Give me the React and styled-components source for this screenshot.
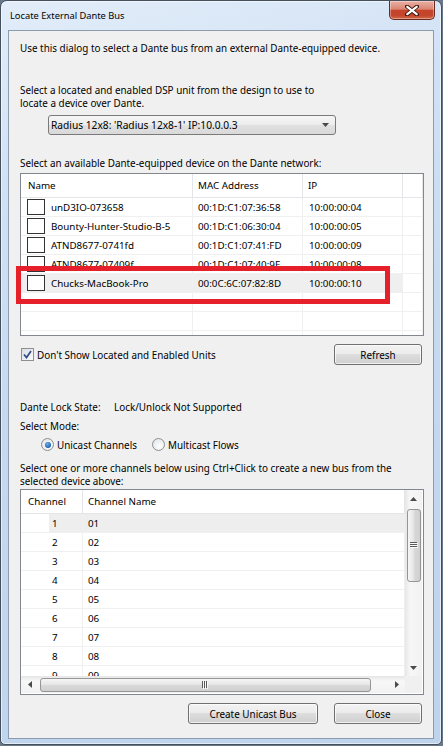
import React from 'react'
import styled, { createGlobalStyle } from 'styled-components'

const GlobalStyle = createGlobalStyle`
  * { box-sizing: border-box; }
  html, body {
    margin: 0;
    padding: 0;
    background: #68778a;
  }
  body {
    font-family: 'Noto Sans', 'Liberation Sans', sans-serif;
    font-size: 9.9px;
    color: #000;
  }
`

const devices = [
  { name: 'unD3IO-073658', mac: '00:1D:C1:07:36:58', ip: '10:00:00:04' },
  { name: 'Bounty-Hunter-Studio-B-5', mac: '00:1D:C1:06:30:04', ip: '10:00:00:05' },
  { name: 'ATND8677-0741fd', mac: '00:1D:C1:07:41:FD', ip: '10:00:00:09' },
  { name: 'ATND8677-07409f', mac: '00:1D:C1:07:40:9F', ip: '10:00:00:08' },
  { name: 'Chucks-MacBook-Pro', mac: '00:0C:6C:07:82:8D', ip: '10:00:00:10', selected: true },
]

const channels = Array.from({ length: 9 }, (_, i) => ({
  num: i + 1,
  name: String(i + 1).padStart(2, '0'),
}))

const Window = styled.div`
  width: 442px;
  height: 745px;
  border: 1px solid #46505d;
  border-radius: 7px 7px 5px 5px;
  background: linear-gradient(165deg, #e2edf9 0%, #d2e2f5 20%, #c5d9ef 50%, #bed4ed 100%);
  box-shadow: inset 0 0 0 1px rgba(255, 255, 255, 0.55);
  display: flex;
  flex-direction: column;
  overflow: hidden;
`

const TitleBar = styled.div`
  height: 29px;
  display: flex;
  align-items: flex-start;
  padding: 0 6px 0 9px;
`

const Title = styled.div`
  flex: 1;
  line-height: 29px;
  font-size: 9.3px;
`

const CloseBox = styled.div`
  width: 46px;
  height: 19px;
  border: 1px solid #6b2a20;
  border-top: none;
  border-radius: 0 0 5px 5px;
  background: linear-gradient(#eab0a5 0%, #d98672 45%, #c5442b 52%, #c3452c 80%, #d2694c 100%);
  box-shadow: inset 0 0 0 1px rgba(255, 255, 255, 0.35);
  display: flex;
  align-items: center;
  justify-content: center;
`

const Client = styled.div`
  flex: 1;
  margin: 0 7px 5px;
  border: 1px solid #8c9cae;
  background: #f0f0f0;
  padding: 0 9px 0 11px;
  display: flex;
  flex-direction: column;
`

const Para = styled.p`
  margin: ${p => p.$top}px 0 0;
  line-height: 13px;
  white-space: nowrap;
`

const Combo = styled.div`
  margin: 5px 0 0 28px;
  width: 288px;
  height: 20px;
  border: 1px solid #7a7a7a;
  border-radius: 3px;
  background: linear-gradient(#f6f6f6, #ececec 50%, #e1e1e1 51%, #d9d9d9);
  display: flex;
  align-items: center;
  justify-content: space-between;
  padding: 0 6px 0 2px;
  font-size: 10.2px;
`

const DeviceArea = styled.div`
  position: relative;
  margin-top: 3px;
`

const DeviceList = styled.div`
  height: 163px;
  border: 1px solid #828790;
  background: #fff;
  overflow: hidden;
`

const DevRow = styled.div`
  display: grid;
  grid-template-columns: 172px 110px 100px 1fr;
  height: ${p => (p.$head ? 24 : 19)}px;
`

const DevCell = styled.div`
  display: flex;
  align-items: center;
  gap: 6px;
  padding-left: ${p => p.$pad ?? 5}px;
  border-right: 1px solid ${p => (p.$head ? '#e3e5e8' : '#f0f0f0')};
  border-bottom: 1px solid ${p => (p.$head ? '#e3e5e8' : '#f0f0f0')};
  background: ${p => (p.$sel ? '#efefef' : '#fff')};
  font-size: 9.8px;
  white-space: nowrap;
  overflow: hidden;
`

const RowBox = styled.span`
  width: 18px;
  height: 16px;
  flex: none;
  border: 1px solid #333;
  background: #fff;
`

// red marker drawn over the chosen device row
const Callout = styled.div`
  position: absolute;
  left: -4px;
  top: 93px;
  width: 374px;
  height: 38px;
  border: 5px solid #e5202a;
  pointer-events: none;
`

const OptionsRow = styled.div`
  margin-top: 8px;
  height: 21px;
  display: flex;
  align-items: center;
  justify-content: space-between;
  padding-right: 2px;
`

const CheckLabel = styled.label`
  display: flex;
  align-items: center;
  gap: 3px;
  padding-left: 1px;
`

const CheckBox = styled.span`
  width: 13px;
  height: 13px;
  border: 1px solid #8e8f8f;
  background: linear-gradient(135deg, #d9dde3, #fbfbfb);
  display: flex;
  align-items: center;
  justify-content: center;
`

const Button = styled.button`
  width: ${p => p.$w}px;
  height: 21px;
  padding: 0;
  border: 1px solid #707070;
  border-radius: 3px;
  background: linear-gradient(#f2f2f2, #ebebeb 50%, #dddddd 50%, #cfcfcf);
  box-shadow: inset 0 0 0 1px rgba(255, 255, 255, 0.7);
  font: inherit;
  color: #000;
`

const LockRow = styled.div`
  margin-top: 36px;
  display: flex;
  line-height: 13px;
`

const LockLabel = styled.span`
  width: 94px;
`

const RadioRow = styled.div`
  margin-top: 5px;
  height: 13px;
  display: flex;
  align-items: center;
  padding-left: 21px;
`

const RadioOpt = styled.label`
  display: flex;
  align-items: center;
  gap: 3px;
  width: ${p => (p.$w ? `${p.$w}px` : 'auto')};
`

const Radio = styled.span`
  width: 13px;
  height: 13px;
  border-radius: 50%;
  border: 1px solid #8a8f96;
  background: radial-gradient(circle at 60% 65%, #ffffff, #dcdfe3);
  display: flex;
  align-items: center;
  justify-content: center;

  &::after {
    content: '';
    display: ${p => (p.$on ? 'block' : 'none')};
    width: 6px;
    height: 6px;
    border-radius: 50%;
    background: radial-gradient(circle at 40% 35%, #6fb0ef, #1e5fae 70%);
  }
`

const ChannelBox = styled.div`
  margin-top: 1px;
  height: 206px;
  border: 1px solid #828790;
  background: #fff;
  display: grid;
  grid-template-columns: 384px 17px;
  grid-template-rows: 186px 17px;
`

const ChannelList = styled.div`
  overflow: hidden;
`

const ChRow = styled.div`
  display: grid;
  grid-template-columns: 62px 1fr;
  height: ${p => (p.$head ? 24 : 19)}px;
`

const ChCell = styled.div`
  display: flex;
  align-items: center;
  padding-left: ${p => p.$pad}px;
  border-right: 1px solid ${p => (p.$head ? '#e3e5e8' : '#f0f0f0')};
  border-bottom: 1px solid ${p => (p.$head ? '#e3e5e8' : '#f0f0f0')};
  background: ${p => p.$bg || '#fff'};
  font-size: 9.8px;
`

const VScroll = styled.div`
  display: flex;
  flex-direction: column;
  background: linear-gradient(to right, #e6e6e6, #f7f7f7 30%, #f2f2f2);
`

const HScroll = styled.div`
  display: flex;
  align-items: center;
  background: linear-gradient(#e6e6e6, #f7f7f7 30%, #f2f2f2);
`

const ArrowBtn = styled.div`
  width: 17px;
  height: 17px;
  flex: none;
  display: flex;
  align-items: center;
  justify-content: center;
`

const Thumb = styled.div`
  flex: none;
  border: 1px solid #959595;
  border-radius: 3px;
  display: flex;
  align-items: center;
  justify-content: center;
  ${p =>
    p.$vertical
      ? `
    width: 14px;
    height: 73px;
    margin: 2px 0 0 2px;
    background: linear-gradient(to right, #f6f6f6, #e6e6e6 45%, #d8d8d8 55%, #d0d0d0);
  `
      : `
    height: 14px;
    width: 331px;
    margin-left: 2px;
    background: linear-gradient(#f6f6f6, #e6e6e6 45%, #d8d8d8 55%, #d0d0d0);
  `}
`

const Spacer = styled.div`
  flex: 1;
`

const Corner = styled.div`
  background: #f0f0f0;
`

const ButtonRow = styled.div`
  margin-top: 8px;
  display: flex;
  justify-content: flex-end;
  gap: 16px;
  padding-right: 2px;
`

const Tri = ({ dir }) => {
  const paths = {
    up: 'M0 4L3.5 0L7 4Z',
    down: 'M0 0H7L3.5 4Z',
    left: 'M4 0V7L0 3.5Z',
    right: 'M0 0V7L4 3.5Z',
  }
  const vert = dir === 'up' || dir === 'down'
  return (
    <svg width={vert ? 7 : 4} height={vert ? 4 : 7} viewBox={vert ? '0 0 7 4' : '0 0 4 7'}>
      <path d={paths[dir]} fill="#4a4a4a" />
    </svg>
  )
}

const Grip = ({ vertical }) => (
  <svg width={vertical ? 8 : 7} height={vertical ? 7 : 8}>
    {[0, 2, 4].map(o =>
      vertical ? (
        <g key={o}>
          <rect x="0" y={o} width="7" height="1" fill="#5a5a5a" />
          <rect x="1" y={o + 1} width="7" height="1" fill="#fff" opacity="0.8" />
        </g>
      ) : (
        <g key={o}>
          <rect x={o} y="0" width="1" height="7" fill="#5a5a5a" />
          <rect x={o + 1} y="1" width="1" height="7" fill="#fff" opacity="0.8" />
        </g>
      )
    )}
  </svg>
)

export default function App() {
  return (
    <>
      <GlobalStyle />
      <Window>
        <TitleBar>
          <Title>Locate External Dante Bus</Title>
          <CloseBox>
            <svg width="14" height="11" viewBox="0 0 14 11">
              <path d="M2 1.5L12 9.5M12 1.5L2 9.5" stroke="#3b1610" strokeWidth="4" strokeLinecap="round" />
              <path d="M2.3 1.8L11.7 9.2M11.7 1.8L2.3 9.2" stroke="#fff" strokeWidth="2.2" strokeLinecap="round" />
            </svg>
          </CloseBox>
        </TitleBar>

        <Client>
          <Para $top={11}>Use this dialog to select a Dante bus from an external Dante-equipped device.</Para>
          <Para $top={29}>
            Select a located and enabled DSP unit from the design to use to
            <br />
            locate a device over Dante.
          </Para>
          <Combo>
            <span>Radius 12x8: 'Radius 12x8-1' IP:10.0.0.3</span>
            <Tri dir="down" />
          </Combo>

          <Para $top={22}>Select an available Dante-equipped device on the Dante network:</Para>
          <DeviceArea>
            <DeviceList>
              <DevRow $head>
                <DevCell $head $pad={7}>Name</DevCell>
                <DevCell $head $pad={5}>MAC Address</DevCell>
                <DevCell $head $pad={5}>IP</DevCell>
                <DevCell $head />
              </DevRow>
              {devices.map(d => (
                <DevRow key={d.name}>
                  <DevCell $pad={6} $sel={d.selected}>
                    <RowBox />
                    {d.name}
                  </DevCell>
                  <DevCell $sel={d.selected}>{d.mac}</DevCell>
                  <DevCell $pad={6} $sel={d.selected}>{d.ip}</DevCell>
                  <DevCell />
                </DevRow>
              ))}
              {[0, 1, 2].map(i => (
                <DevRow key={i}>
                  <DevCell />
                  <DevCell />
                  <DevCell />
                  <DevCell />
                </DevRow>
              ))}
            </DeviceList>
            <Callout />
          </DeviceArea>

          <OptionsRow>
            <CheckLabel>
              <CheckBox>
                <svg width="9" height="9" viewBox="0 0 9 9">
                  <path d="M1 4.5L3.5 7.5L8 1" fill="none" stroke="#2f4a86" strokeWidth="1.7" />
                </svg>
              </CheckBox>
              Don't Show Located and Enabled Units
            </CheckLabel>
            <Button $w={88}>Refresh</Button>
          </OptionsRow>

          <LockRow>
            <LockLabel>Dante Lock State:</LockLabel>
            <span>Lock/Unlock Not Supported</span>
          </LockRow>

          <Para $top={6}>Select Mode:</Para>
          <RadioRow>
            <RadioOpt $w={111}>
              <Radio $on />
              Unicast Channels
            </RadioOpt>
            <RadioOpt>
              <Radio />
              Multicast Flows
            </RadioOpt>
          </RadioRow>

          <Para $top={11}>
            Select one or more channels below using Ctrl+Click to create a new bus from the
            <br />
            selected device above:
          </Para>

          <ChannelBox>
            <ChannelList>
              <ChRow $head>
                <ChCell $head $pad={7}>Channel</ChCell>
                <ChCell $head $pad={5}>Channel Name</ChCell>
              </ChRow>
              {channels.map(c => (
                <ChRow key={c.num}>
                  <ChCell
                    $pad={31}
                    $bg={c.num === 1 ? 'linear-gradient(to right, #fff 28px, #eeeeee 28px)' : undefined}
                  >
                    {c.num}
                  </ChCell>
                  <ChCell $pad={5} $bg={c.num === 1 ? '#eeeeee' : undefined}>
                    {c.name}
                  </ChCell>
                </ChRow>
              ))}
            </ChannelList>
            <VScroll>
              <ArrowBtn><Tri dir="up" /></ArrowBtn>
              <Thumb $vertical><Grip vertical /></Thumb>
              <Spacer />
              <ArrowBtn><Tri dir="down" /></ArrowBtn>
            </VScroll>
            <HScroll>
              <ArrowBtn><Tri dir="left" /></ArrowBtn>
              <Thumb><Grip /></Thumb>
              <Spacer />
              <ArrowBtn><Tri dir="right" /></ArrowBtn>
            </HScroll>
            <Corner />
          </ChannelBox>

          <ButtonRow>
            <Button $w={130}>Create Unicast Bus</Button>
            <Button $w={88}>Close</Button>
          </ButtonRow>
        </Client>
      </Window>
    </>
  )
}
